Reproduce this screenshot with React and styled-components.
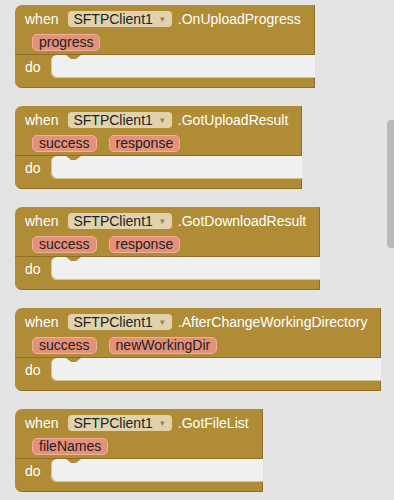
import React from 'react';
import styled, { createGlobalStyle } from 'styled-components';

const GOLD = '#b08c36';
const GOLD_DARK = '#8d6f27';

const blocks = [
	{ event: 'OnUploadProgress', params: ['progress'] },
	{ event: 'GotUploadResult', params: ['success', 'response'] },
	{ event: 'GotDownloadResult', params: ['success', 'response'] },
	{ event: 'AfterChangeWorkingDirectory', params: ['success', 'newWorkingDir'] },
	{ event: 'GotFileList', params: ['fileNames'] },
];

export default function App() {
	return (
		<>
			<GlobalStyle />
			<Workspace>
				{blocks.map((b) => (
					<EventBlock key={b.event} event={b.event} params={b.params} />
				))}
				<ScrollThumb />
			</Workspace>
		</>
	);
}

function EventBlock({ event, params }) {
	return (
		<Block>
			<Top>
				<Header>
					<Label>when</Label>
					<Dropdown>
						SFTPClient1
						<Caret>▾</Caret>
					</Dropdown>
					<Label>.{event}</Label>
				</Header>
				<Params>
					{params.map((p) => (
						<Param key={p}>{p}</Param>
					))}
				</Params>
			</Top>
			<DoRow>
				<Arm>
					<Label>do</Label>
				</Arm>
				<Slot>
					<Notch width='15' height='5' viewBox='0 0 15 5'>
						<path d='M0 0 L5 4 L10 4 L15 0 Z' fill={GOLD} />
					</Notch>
				</Slot>
			</DoRow>
			<Bottom />
		</Block>
	);
}

const GlobalStyle = createGlobalStyle`
	html, body {
		margin: 0;
		background: #e4e4e4;
	}
`;

const Workspace = styled.div`
	position: relative;
	height: 500px;
	overflow: hidden;
	padding: 5px 0 0 15px;
	box-sizing: border-box;
	display: flex;
	flex-direction: column;
	align-items: flex-start;
	gap: 18px;
	font-family: 'Liberation Sans', Arial, sans-serif;
	font-size: 14px;
`;

const ScrollThumb = styled.div`
	position: absolute;
	left: 387px;
	top: 120px;
	width: 8px;
	height: 128px;
	background: #bababa;
	border-radius: 4px 0 0 4px;
`;

const Block = styled.div`
	display: flex;
	flex-direction: column;
	width: fit-content;
`;

const Top = styled.div`
	background: ${GOLD};
	border-radius: 7px 0 0 0;
	border-right: 1px solid ${GOLD_DARK};
	border-bottom: 1px solid ${GOLD_DARK};
	padding: 6px 13px 3px 10px;
	display: flex;
	flex-direction: column;
	gap: 7px;
`;

const Header = styled.div`
	display: flex;
	align-items: center;
	height: 16px;
`;

const Label = styled.span`
	color: #fff;
	line-height: 16px;
	white-space: nowrap;
`;

const Dropdown = styled.span`
	display: inline-flex;
	align-items: center;
	height: 16px;
	margin: 0 6px 0 10px;
	padding: 0 7px 0 5px;
	background: #e0d2ac;
	border-radius: 4px;
	color: #222;
	line-height: 16px;
`;

const Caret = styled.span`
	margin-left: 7px;
	font-size: 9px;
	color: #9a844c;
`;

const Params = styled.div`
	display: flex;
	gap: 12px;
	padding-left: 7px;
`;

const Param = styled.span`
	height: 15px;
	line-height: 15px;
	padding: 0 6px;
	background: #e5907a;
	border: 1px solid #f1b09c;
	border-radius: 5px;
	color: #222;
`;

const DoRow = styled.div`
	display: flex;
	height: 23px;
	background: ${GOLD};
`;

const Arm = styled.div`
	width: 36px;
	padding-left: 10px;
	box-sizing: border-box;
	display: flex;
	align-items: center;
`;

const Slot = styled.div`
	position: relative;
	flex: 1;
	background: #f0f0f0;
	border-radius: 6px 0 0 6px;
	box-shadow: inset 1px -1px 0 #d8c48f;
`;

const Notch = styled.svg`
	position: absolute;
	top: 0;
	left: 15px;
	display: block;
`;

const Bottom = styled.div`
	height: 10px;
	background: ${GOLD};
	border-radius: 0 0 0 7px;
	border-right: 1px solid ${GOLD_DARK};
	border-bottom: 1px solid ${GOLD_DARK};
	box-sizing: border-box;
`;
